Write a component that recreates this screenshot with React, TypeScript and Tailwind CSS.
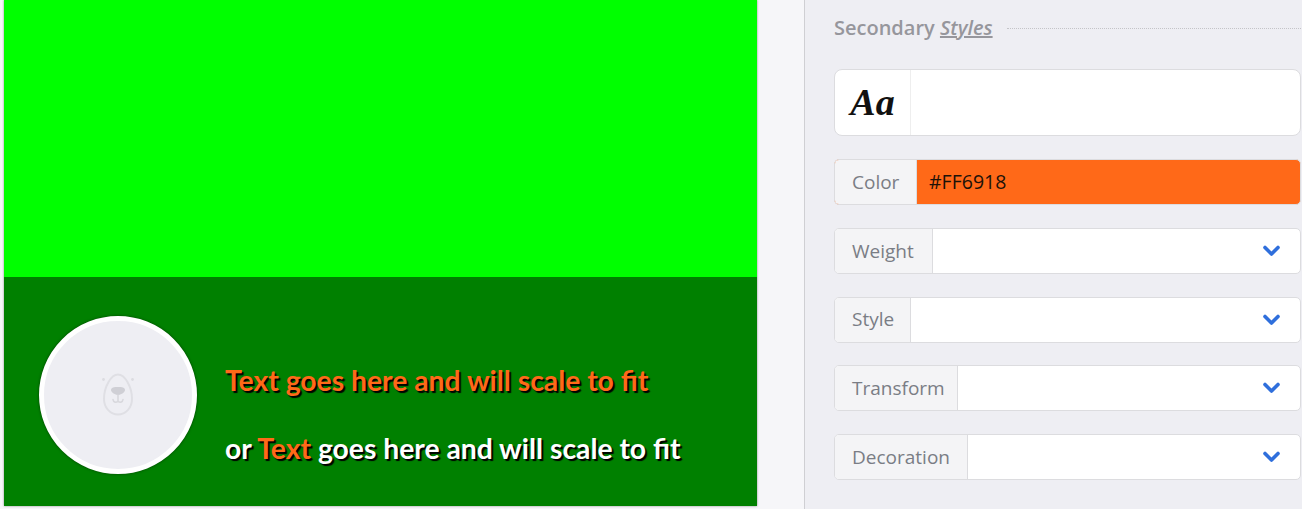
const selects = [
  { label: "Weight", width: "w-[98px]" },
  { label: "Style", width: "w-[76px]" },
  { label: "Transform", width: "w-[123px]" },
  { label: "Decoration", width: "w-[133px]" },
];

const labelFont = "font-['Open_Sans','Noto_Sans',sans-serif]";
const shadow = "[text-shadow:2px_2px_1px_#000]";

function BearIcon() {
  return (
    <svg width="34" height="44" viewBox="0 0 34 44" fill="none">
      <circle cx="2.5" cy="6.5" r="1.4" fill="#dcdce1" />
      <circle cx="31.5" cy="6.5" r="1.4" fill="#dcdce1" />
      <path
        d="M17 1.5C10 1.5 3 14 3 26C3 35 9.5 41.5 17 41.5C24.5 41.5 31 35 31 26C31 14 24 1.5 17 1.5Z"
        stroke="#dfdfe4"
        strokeWidth="2"
      />
      <path d="M10 17C10 14.5 13 14 17 14C21 14 24 14.5 24 17C24 19.5 19.5 22 17 22C14.5 22 10 19.5 10 17Z" fill="#cfcfd5" />
      <path d="M17 22V28M12 26.5C12.3 29.5 15.5 30 17 28C18.5 30 21.7 29.5 22 26.5" stroke="#d8d8dd" strokeWidth="1.6" strokeLinecap="round" />
    </svg>
  );
}

function Chevron() {
  return (
    <svg width="17" height="12" viewBox="0 0 17 12" fill="none">
      <path d="M2 2.5L8.5 9L15 2.5" stroke="#2f6fdc" strokeWidth="3.6" strokeLinecap="round" strokeLinejoin="round" />
    </svg>
  );
}

function Preview() {
  return (
    <div className="w-[757px] h-[509px] shrink-0 pl-1 pb-[3px] bg-[#f6f6f9]">
      <div className="flex flex-col h-full shadow-[0_0_2px_#888]">
        <div className="h-[277px] bg-[#00ff00]" />
        <div className="flex-1 bg-[#008000] flex items-center pl-[35px] pt-[7px]">
          <div className="flex items-center justify-center w-[158px] h-[158px] rounded-full bg-[#eeeef3] border-[5px] border-white shadow-[0_0_3px_rgba(0,0,0,0.5)] shrink-0">
            <BearIcon />
          </div>
          <div className={`ml-[28px] flex flex-col gap-[34px] pt-[38px] text-[28.3px] leading-[34px] font-bold font-['Lato',sans-serif] ${shadow}`}>
            <div className="text-[#ff6918]">Text goes here and will scale to fit</div>
            <div className="text-white">
              or <span className="text-[#ff6918]">Text</span> goes here and will scale to fit
            </div>
          </div>
        </div>
      </div>
    </div>
  );
}

function SelectRow({ label, width }: { label: string; width: string }) {
  return (
    <div className="flex h-[46px] rounded-[5px] border border-[#dcdcdf] bg-white overflow-hidden">
      <div className={`flex items-center pl-[17px] shrink-0 ${width} bg-[#f4f4f6] border-r border-[#dcdcdf] text-[19px] text-[#7a7d85] ${labelFont}`}>
        {label}
      </div>
      <div className="flex-1 flex items-center justify-end pr-[20px]">
        <Chevron />
      </div>
    </div>
  );
}

function Panel() {
  return (
    <div className="flex-1 min-w-0 border-l border-[#cfcfd3] bg-[#eeeef3] pl-[29px] pr-px pt-[13px]">
      <div className="flex items-center h-[30px] mb-[26px]">
        <span className={`text-[20px] font-semibold text-[#96969c] whitespace-nowrap ${labelFont}`}>
          Secondary <em className="underline">Styles</em>
        </span>
        <div className="flex-1 ml-[14px] border-t border-dotted border-[#c4c4c8]" />
      </div>
      <div className="flex h-[67px] rounded-[8px] border border-[#dcdcdf] bg-white overflow-hidden">
        <div className="w-[76px] flex items-center justify-center border-r border-[#eeeeee] text-[38px] italic font-bold text-[#111] font-['Liberation_Serif',serif]">
          Aa
        </div>
      </div>
      <div className="flex flex-col gap-[22.75px] mt-[23px]">
        <div className="flex h-[46px] rounded-[5px] border border-[#dcdcdf] bg-[#ff6918] overflow-hidden">
          <div className={`flex items-center pl-[17px] w-[82px] shrink-0 bg-[#f4f4f6] border-r border-[#dcdcdf] text-[19px] text-[#7a7d85] ${labelFont}`}>
            Color
          </div>
          <div className={`flex-1 flex items-center pl-[12px] text-[19.5px] text-[#1c1208] ${labelFont}`}>#FF6918</div>
        </div>
        {selects.map((s) => (
          <SelectRow key={s.label} label={s.label} width={s.width} />
        ))}
      </div>
    </div>
  );
}

export default function App() {
  return (
    <div className="flex h-[509px] w-[1302px] overflow-hidden bg-[#f6f6f9]">
      <Preview />
      <div className="w-[47px] shrink-0" />
      <Panel />
    </div>
  );
}
